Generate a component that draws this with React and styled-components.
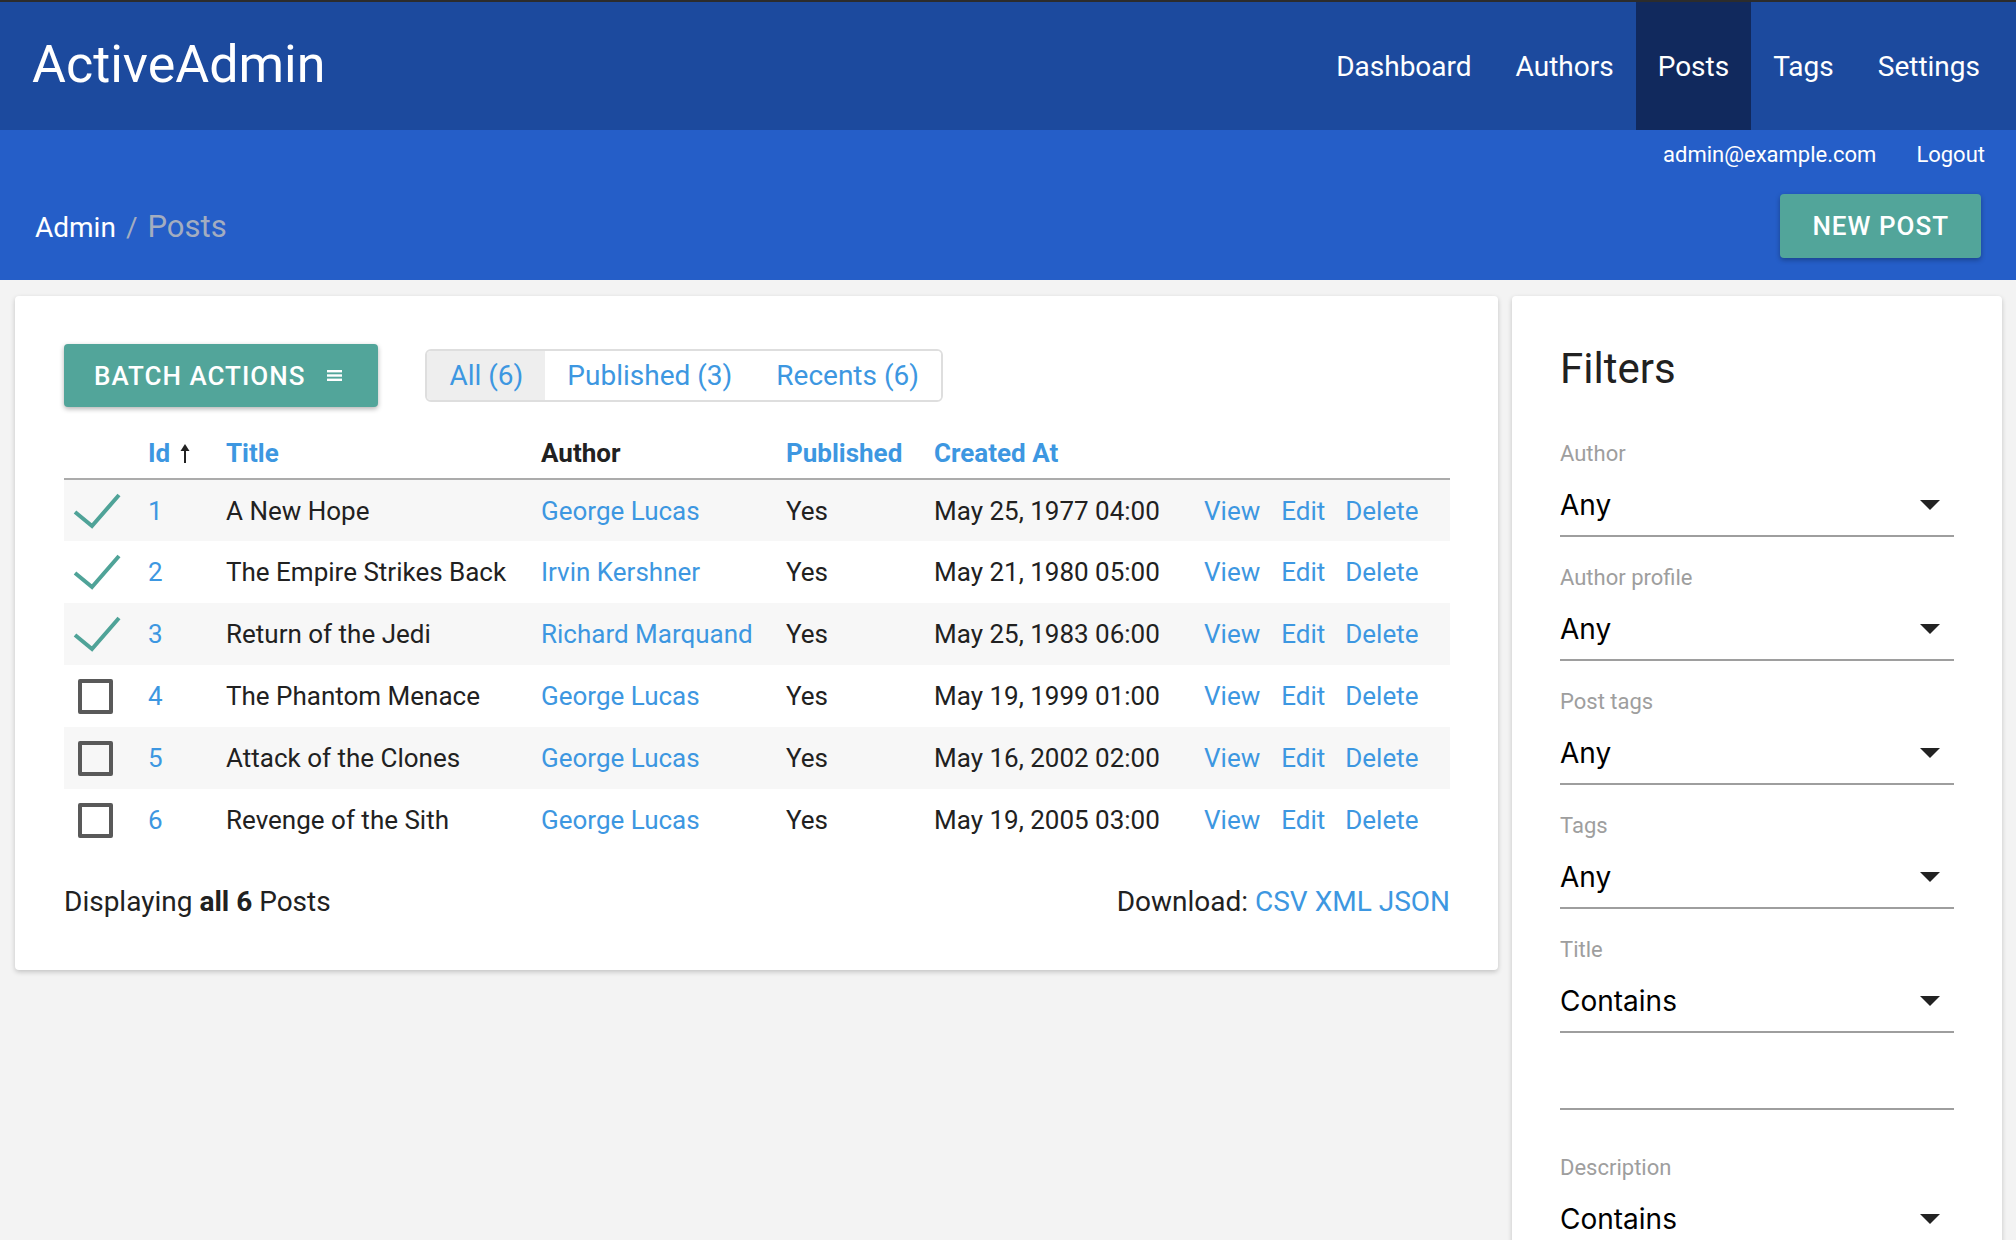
import React from "react";
import styled, { createGlobalStyle } from "styled-components";

const GlobalStyle = createGlobalStyle`
  html, body { margin: 0; padding: 0; }
  body {
    background: #f3f3f3;
    font-family: Roboto, "Noto Sans", sans-serif;
    color: #212121;
  }
  * { box-sizing: border-box; }
`;

const BLUE = "#3d97e1";
const TEAL = "#52a59a";

const TopBar = styled.header`
  height: 130px;
  border-top: 2px solid #2c2c2c;
  background: #1c4a9e;
  display: flex;
  justify-content: space-between;
  align-items: stretch;
  padding: 0 14px 0 32px;
`;

const Logo = styled.div`
  align-self: center;
  font-size: 52px;
  color: #fff;
  line-height: 1;
  margin-top: -2px;
`;

const Nav = styled.nav`
  display: flex;
  align-items: stretch;
`;

const NavItem = styled.a`
  display: flex;
  align-items: center;
  padding: 0 22px;
  font-size: 28px;
  color: #fff;
  text-decoration: none;
  background: ${(p) => (p.$active ? "#11295d" : "transparent")};
`;

const SubBand = styled.div`
  background: #255ec8;
  padding: 12px 35px 22px 35px;
`;

const UtilityRow = styled.div`
  display: flex;
  justify-content: flex-end;
  gap: 40px;
  font-size: 22px;
  line-height: 26px;
  color: #fff;
  margin-right: -4px;
`;

const TitleRow = styled.div`
  display: flex;
  justify-content: space-between;
  align-items: center;
  margin-top: 26px;
`;

const Breadcrumb = styled.div`
  display: flex;
  align-items: baseline;
  color: #fff;
`;

const Crumb = styled.span`
  font-size: ${(p) => (p.$muted ? 31 : 28)}px;
  color: ${(p) => (p.$muted ? "#a3adc0" : "#fff")};
`;

const Sep = styled.span`
  font-size: 28px;
  color: #a3adc0;
  margin: 0 10px;
`;

const RaisedButton = styled.button`
  display: inline-flex;
  align-items: center;
  justify-content: center;
  gap: 22px;
  border: none;
  border-radius: 4px;
  background: ${TEAL};
  color: #fff;
  font-family: Roboto, sans-serif;
  font-weight: 500;
  font-size: 26px;
  letter-spacing: 1px;
  text-transform: uppercase;
  height: ${(p) => p.$h}px;
  padding: ${(p) => p.$pad};
  box-shadow: 0 2px 5px rgba(0, 0, 0, 0.3);
  cursor: pointer;
`;

const Main = styled.main`
  display: flex;
  align-items: flex-start;
  gap: 14px;
  padding: 16px 14px 0 15px;
`;

const Card = styled.section`
  background: #fff;
  border-radius: 4px;
  box-shadow: 0 2px 5px rgba(0, 0, 0, 0.2);
`;

const ContentCard = styled(Card)`
  flex: 1;
  padding: 48px 48px 50px 49px;
`;

const Toolbar = styled.div`
  display: flex;
  align-items: center;
  gap: 47px;
  margin-bottom: 16px;
`;

const Scopes = styled.div`
  display: flex;
  height: 53px;
  border: 2px solid #dedede;
  border-radius: 6px;
  overflow: hidden;
`;

const Scope = styled.a`
  display: flex;
  align-items: center;
  padding: 0 22px;
  font-size: 28px;
  color: ${BLUE};
  background: ${(p) => (p.$active ? "#eeeeee" : "#fff")};
  text-decoration: none;
`;

const Table = styled.table`
  width: 100%;
  border-collapse: collapse;
  table-layout: fixed;
`;

const Th = styled.th`
  height: 56px;
  padding: 4px 0 0 ${(p) => (p.$pad != null ? p.$pad : 16)}px;
  text-align: left;
  font-size: 26px;
  font-weight: 700;
  color: ${(p) => (p.$plain ? "#212121" : BLUE)};
  border-bottom: 2px solid #ababab;
  vertical-align: middle;
  white-space: nowrap;
`;

const Tr = styled.tr`
  background: ${(p) => (p.$striped ? "#f7f7f7" : "#fff")};
`;

const Td = styled.td`
  height: 62px;
  padding: 0 0 0 ${(p) => (p.$pad != null ? p.$pad : 16)}px;
  font-size: 26px;
  color: #212121;
  vertical-align: middle;
  white-space: nowrap;
`;

const Link = styled.a`
  color: ${BLUE};
  text-decoration: none;
  margin-right: ${(p) => p.$gap || 0}px;
`;

const CheckBox = styled.span`
  display: block;
  width: 35px;
  height: 35px;
  margin-left: 14px;
  border: 4px solid #595959;
  border-radius: 2px;
`;

const CheckSvg = styled.svg`
  display: block;
  margin-left: 9px;
`;

const SortArrow = styled.svg`
  margin-left: 10px;
  vertical-align: -1px;
`;

const Footer = styled.div`
  display: flex;
  justify-content: space-between;
  align-items: center;
  margin-top: 33px;
  font-size: 28px;
  line-height: 36px;
`;

const FilterCard = styled(Card)`
  width: 490px;
  flex: none;
  padding: 48px 48px 60px 48px;
`;

const FilterTitle = styled.h3`
  margin: 0 0 48px 0;
  font-size: 42px;
  line-height: 49px;
  font-weight: 400;
  color: #212121;
`;

const Field = styled.div`
  margin-bottom: ${(p) => p.$mb || 28}px;
`;

const FieldLabel = styled.label`
  display: block;
  font-size: 22px;
  line-height: 26px;
  color: #9e9e9e;
`;

const Select = styled.div`
  margin-top: 8px;
  padding: 13px 0;
  border-bottom: 2px solid #9e9e9e;
  display: flex;
  justify-content: space-between;
  align-items: center;
  font-family: Inter, "Noto Sans", sans-serif;
  font-size: 28px;
  line-height: 34px;
  color: #000;
`;

const Caret = styled.span`
  width: 0;
  height: 0;
  margin-right: 14px;
  border-left: 10px solid transparent;
  border-right: 10px solid transparent;
  border-top: 10px solid #222;
`;

const TextInput = styled.div`
  height: 77px;
  border-bottom: 2px solid #9e9e9e;
`;

const posts = [
  { id: 1, title: "A New Hope", author: "George Lucas", date: "May 25, 1977 04:00", checked: true },
  { id: 2, title: "The Empire Strikes Back", author: "Irvin Kershner", date: "May 21, 1980 05:00", checked: true },
  { id: 3, title: "Return of the Jedi", author: "Richard Marquand", date: "May 25, 1983 06:00", checked: true },
  { id: 4, title: "The Phantom Menace", author: "George Lucas", date: "May 19, 1999 01:00", checked: false },
  { id: 5, title: "Attack of the Clones", author: "George Lucas", date: "May 16, 2002 02:00", checked: false },
  { id: 6, title: "Revenge of the Sith", author: "George Lucas", date: "May 19, 2005 03:00", checked: false },
];

const filters = [
  { label: "Author", value: "Any" },
  { label: "Author profile", value: "Any" },
  { label: "Post tags", value: "Any" },
  { label: "Tags", value: "Any" },
];

function Check() {
  return (
    <CheckSvg width="50" height="38" viewBox="0 0 50 38">
      <polyline
        points="2,20 19,34 46,3"
        fill="none"
        stroke="#4fa398"
        strokeWidth="4"
      />
    </CheckSvg>
  );
}

function MenuIcon() {
  return (
    <svg width="15" height="11" viewBox="0 0 15 11">
      <rect x="0" y="0" width="15" height="2.4" fill="#fff" />
      <rect x="0" y="4.3" width="15" height="2.4" fill="#fff" />
      <rect x="0" y="8.6" width="15" height="2.4" fill="#fff" />
    </svg>
  );
}

export default function App() {
  return (
    <>
      <GlobalStyle />
      <TopBar>
        <Logo>ActiveAdmin</Logo>
        <Nav>
          <NavItem>Dashboard</NavItem>
          <NavItem>Authors</NavItem>
          <NavItem $active>Posts</NavItem>
          <NavItem>Tags</NavItem>
          <NavItem>Settings</NavItem>
        </Nav>
      </TopBar>
      <SubBand>
        <UtilityRow>
          <span>admin@example.com</span>
          <span>Logout</span>
        </UtilityRow>
        <TitleRow>
          <Breadcrumb>
            <Crumb>Admin</Crumb>
            <Sep>/</Sep>
            <Crumb $muted>Posts</Crumb>
          </Breadcrumb>
          <RaisedButton $h={64} $pad="0 32px">New Post</RaisedButton>
        </TitleRow>
      </SubBand>

      <Main>
        <ContentCard>
          <Toolbar>
            <RaisedButton $h={63} $pad="0 36px 0 30px">
              Batch Actions
              <MenuIcon />
            </RaisedButton>
            <Scopes>
              <Scope $active>All (6)</Scope>
              <Scope>Published (3)</Scope>
              <Scope>Recents (6)</Scope>
            </Scopes>
          </Toolbar>

          <Table>
            <colgroup>
              <col style={{ width: 68 }} />
              <col style={{ width: 78 }} />
              <col style={{ width: 315 }} />
              <col style={{ width: 245 }} />
              <col style={{ width: 148 }} />
              <col style={{ width: 270 }} />
              <col />
            </colgroup>
            <thead>
              <tr>
                <Th $pad={0} />
                <Th>
                  Id
                  <SortArrow width="10" height="19" viewBox="0 0 10 19">
                    <line x1="5" y1="5" x2="5" y2="19" stroke="#222" strokeWidth="2" />
                    <polygon points="0.5,7 5,0 9.5,7" fill="#222" />
                  </SortArrow>
                </Th>
                <Th>Title</Th>
                <Th $plain>Author</Th>
                <Th>Published</Th>
                <Th>Created At</Th>
                <Th />
              </tr>
            </thead>
            <tbody>
              {posts.map((p, i) => (
                <Tr key={p.id} $striped={i % 2 === 0}>
                  <Td $pad={0}>{p.checked ? <Check /> : <CheckBox />}</Td>
                  <Td>
                    <Link>{p.id}</Link>
                  </Td>
                  <Td>{p.title}</Td>
                  <Td>
                    <Link>{p.author}</Link>
                  </Td>
                  <Td>Yes</Td>
                  <Td>{p.date}</Td>
                  <Td>
                    <Link $gap={21}>View</Link>
                    <Link $gap={20}>Edit</Link>
                    <Link>Delete</Link>
                  </Td>
                </Tr>
              ))}
            </tbody>
          </Table>

          <Footer>
            <span>
              Displaying <b>all 6</b> Posts
            </span>
            <span>
              Download: <Link>CSV</Link> <Link>XML</Link> <Link>JSON</Link>
            </span>
          </Footer>
        </ContentCard>

        <FilterCard>
          <FilterTitle>Filters</FilterTitle>
          {filters.map((f) => (
            <Field key={f.label}>
              <FieldLabel>{f.label}</FieldLabel>
              <Select>
                {f.value}
                <Caret />
              </Select>
            </Field>
          ))}
          <Field $mb={45}>
            <FieldLabel>Title</FieldLabel>
            <Select>
              Contains
              <Caret />
            </Select>
            <TextInput />
          </Field>
          <Field $mb={45}>
            <FieldLabel>Description</FieldLabel>
            <Select>
              Contains
              <Caret />
            </Select>
            <TextInput />
          </Field>
          <Field>
            <FieldLabel>Created at</FieldLabel>
            <TextInput />
          </Field>
        </FilterCard>
      </Main>
    </>
  );
}
